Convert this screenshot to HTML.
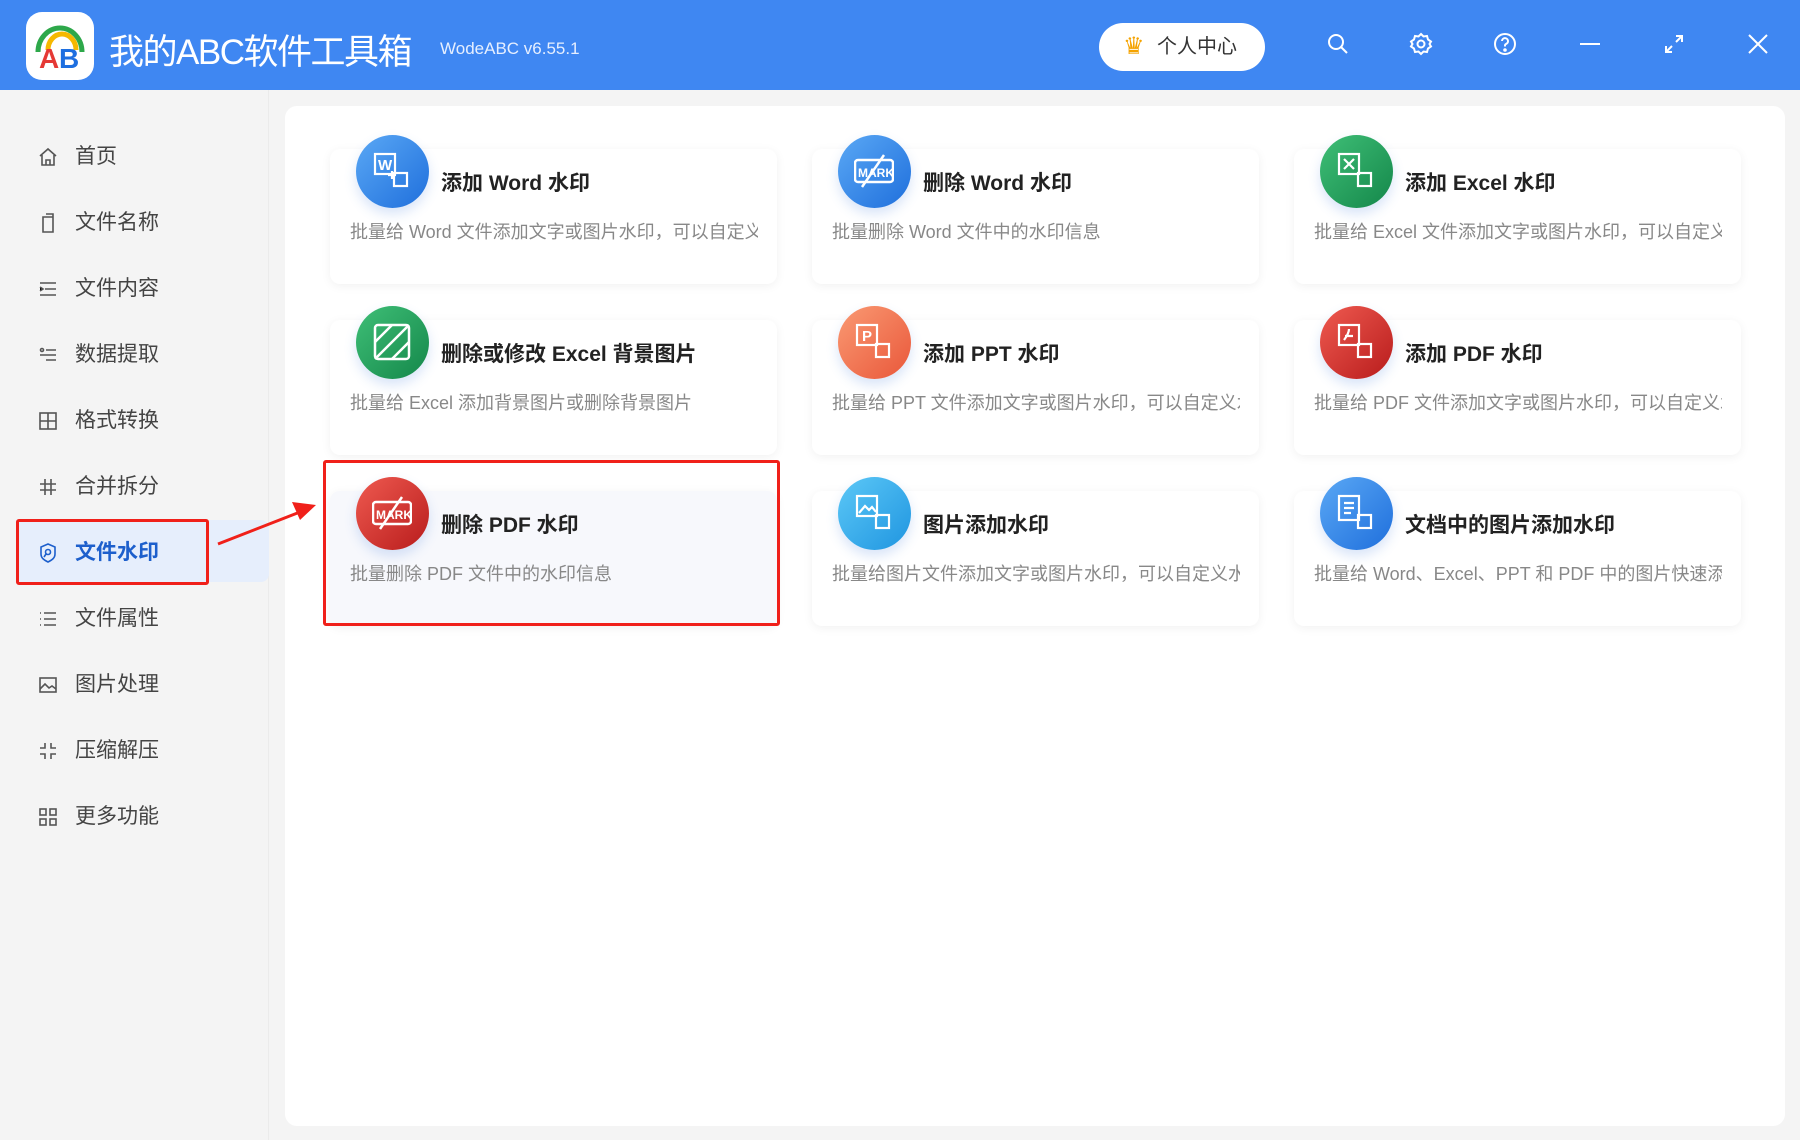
<!DOCTYPE html>
<html><head><meta charset="utf-8"><style>
*{margin:0;padding:0;box-sizing:border-box}
body{width:1800px;height:1140px;background:#f4f4f4;font-family:"Liberation Sans","Noto Sans CJK SC",sans-serif;position:relative;overflow:hidden}
.hdr{position:absolute;left:0;top:0;width:1800px;height:90px;background:#3f87f2}
.logo{position:absolute;left:26px;top:12px;width:68px;height:68px;background:#fff;border-radius:16px}
.title{position:absolute;left:109px;top:24px;color:#fff;font-size:35px;letter-spacing:-1.5px}
.ver{position:absolute;left:440px;top:39px;color:#e6efff;font-size:17px}
.btn{position:absolute;left:1099px;top:23px;width:166px;height:48px;background:#fff;border-radius:24px;font-size:20px;color:#333;line-height:48px;padding-left:58px}
.hi{position:absolute;top:32px}
.side{position:absolute;left:0;top:90px;width:269px;height:1050px;border-right:1px solid #ebebeb}
.it{position:absolute;left:0;width:269px;height:40px;font-size:21px;color:#444;line-height:40px;padding-left:75px}
.it svg{position:absolute;left:38px;top:10px}
.act{position:absolute;left:16px;top:520px;width:253px;height:62px;background:#e6eefc;border-radius:0 8px 8px 0}
.redsb{position:absolute;left:16px;top:519px;width:193px;height:66px;border:3px solid #f0201a;border-radius:3px}
.main{position:absolute;left:285px;top:106px;width:1500px;height:1020px;background:#fff;border-radius:12px}
.card{position:absolute;width:447px;height:135px;background:#fff;border-radius:10px;box-shadow:0 2px 10px rgba(0,0,0,0.06)}
.card .ic{position:absolute;left:26px;top:-14px;width:73px;height:73px;border-radius:50%;box-shadow:0 6px 12px rgba(60,120,220,0.2)}
.card .t{position:absolute;left:111px;top:18px;font-size:21px;font-weight:bold;color:#222}
.card .d{position:absolute;left:20px;top:69px;width:408px;white-space:nowrap;overflow:hidden;font-size:18px;color:#888}
.ic svg{position:absolute;left:16px;top:16px}
</style></head><body>
<div class="hdr">
 <div class="logo"><svg width="68" height="68" viewBox="0 0 68 68"><path d="M12 40 A22 24 0 0 1 56 40" fill="none" stroke="#2da84a" stroke-width="5"/><path d="M22 38 A14 16 0 0 1 50 38" fill="none" stroke="#f6b800" stroke-width="5"/><text x="13" y="56" font-size="28" font-weight="bold" fill="#e53935" font-family="Liberation Sans">A</text><text x="33" y="56" font-size="28" font-weight="bold" fill="#1e6fe0" font-family="Liberation Sans">B</text></svg></div>
 <div class="title">我的ABC软件工具箱</div>
 <div class="ver">WodeABC v6.55.1</div>
 <div class="btn"><span style="position:absolute;left:24px;top:0;color:#f5a300;font-size:24px">♛</span>个人中心</div>
 <svg class="hi" style="left:1326px" width="24" height="24" viewBox="0 0 24 24" fill="none" stroke="#fff" stroke-width="2"><circle cx="10" cy="10" r="7"/><path d="M15 15l6 6"/></svg>
 <svg class="hi" style="left:1409px" width="24" height="24" viewBox="0 0 24 24" fill="none" stroke="#fff" stroke-width="2"><circle cx="12" cy="12" r="3.5"/><path d="M12 2l2.5 2.5 3.5-.5 1 3.5 3 2-1.5 2.5 1.5 2.5-3 2-1 3.5-3.5-.5L12 22l-2.5-2.5-3.5.5-1-3.5-3-2L3.5 12 2 9.5l3-2 1-3.5 3.5.5z"/></svg>
 <svg class="hi" style="left:1493px" width="24" height="24" viewBox="0 0 24 24" fill="none" stroke="#fff" stroke-width="2"><circle cx="12" cy="12" r="10"/><path d="M9 9a3 3 0 1 1 4 3c-1 .5-1 1-1 2.5"/><circle cx="12" cy="18" r=".8" fill="#fff"/></svg>
 <svg class="hi" style="left:1578px" width="24" height="24" viewBox="0 0 24 24" stroke="#fff" stroke-width="2"><path d="M2 12h20"/></svg>
 <svg class="hi" style="left:1662px" width="24" height="24" viewBox="0 0 24 24" fill="none" stroke="#fff" stroke-width="2"><path d="M4 20l6-6M20 4l-6 6M14 4h6v6M4 14v6h6"/></svg>
 <svg class="hi" style="left:1746px" width="24" height="24" viewBox="0 0 24 24" stroke="#fff" stroke-width="2"><path d="M3 3l18 18M21 3L3 21"/></svg>
</div>
<div class="side"></div>
<div class="act"></div>
<div class="it" style="top:137px"><svg width="20" height="20" viewBox="0 0 20 20" fill="none" stroke="#555" stroke-width="1.6"><path d="M2 9l8-7 8 7M4 8v10h12V8M8 18v-5h4v5"/></svg>首页</div>
<div class="it" style="top:203px"><svg width="20" height="20" viewBox="0 0 20 20" fill="none" stroke="#555" stroke-width="1.6"><path d="M5 4h10v15H5zM8 1h7v3"/></svg>文件名称</div>
<div class="it" style="top:269px"><svg width="20" height="20" viewBox="0 0 20 20" stroke="#555" stroke-width="1.6"><path d="M2 4h16M7 10h11M2 16h16M2 8l3 2-3 2"/></svg>文件内容</div>
<div class="it" style="top:335px"><svg width="20" height="20" viewBox="0 0 20 20" fill="none" stroke="#555" stroke-width="1.6"><path d="M8 5h10M2 10h16M8 15h10"/><circle cx="4" cy="5" r="1.5"/></svg>数据提取</div>
<div class="it" style="top:401px"><svg width="20" height="20" viewBox="0 0 20 20" fill="none" stroke="#555" stroke-width="1.6"><rect x="2" y="2" width="16" height="16"/><path d="M10 2v16M2 10h16"/></svg>格式转换</div>
<div class="it" style="top:467px"><svg width="20" height="20" viewBox="0 0 20 20" stroke="#555" stroke-width="1.6"><path d="M7 2v16M13 2v16M2 7h16M2 13h16"/></svg>合并拆分</div>
<div class="it" style="top:533px;color:#1d5fcc;font-weight:bold"><svg width="20" height="20" viewBox="0 0 20 20" fill="none" stroke="#1d5fcc" stroke-width="1.6"><path d="M10 1l7 3v7c0 4-3 6-7 8-4-2-7-4-7-8V4z"/><circle cx="10" cy="9" r="2.5"/><path d="M8 11l-2 3"/></svg>文件水印</div>
<div class="redsb"></div>
<div class="it" style="top:599px"><svg width="20" height="20" viewBox="0 0 20 20" stroke="#555" stroke-width="1.6"><path d="M6 4h12M6 10h12M6 16h12M2 4h1M2 10h1M2 16h1"/></svg>文件属性</div>
<div class="it" style="top:665px"><svg width="20" height="20" viewBox="0 0 20 20" fill="none" stroke="#555" stroke-width="1.6"><rect x="2" y="3" width="16" height="14"/><path d="M2 14l5-5 4 4 3-2 4 3"/></svg>图片处理</div>
<div class="it" style="top:731px"><svg width="20" height="20" viewBox="0 0 20 20" fill="none" stroke="#555" stroke-width="1.6"><path d="M7 2v5H2M13 2v5h5M7 18v-5H2M13 18v-5h5"/></svg>压缩解压</div>
<div class="it" style="top:797px"><svg width="20" height="20" viewBox="0 0 20 20" fill="none" stroke="#555" stroke-width="1.6"><rect x="2" y="2" width="6" height="6"/><rect x="12" y="2" width="6" height="6"/><rect x="2" y="12" width="6" height="6"/><rect x="12" y="12" width="6" height="6"/></svg>更多功能</div>

<div class="main"></div>

<div class="card" style="left:330px;top:149px"><div class="ic" style="background:linear-gradient(135deg,#5aa8f5,#1f6fdc)"><svg width="40" height="40" viewBox="0 0 40 40" fill="none" stroke="#fff" stroke-width="2.2"><rect x="3" y="3" width="20" height="20"/><text x="6" y="19" font-size="15" font-weight="bold" fill="#fff" stroke="none" font-family="Liberation Sans">W</text><rect x="22" y="22" width="13" height="13"/><path d="M20 20v8M16 24h8"/></svg></div><div class="t">添加 Word 水印</div><div class="d">批量给 Word 文件添加文字或图片水印，可以自定义</div></div>
<div class="card" style="left:812px;top:149px"><div class="ic" style="background:linear-gradient(135deg,#5aa8f5,#1f6fdc)"><svg width="40" height="40" viewBox="0 0 40 40" fill="none" stroke="#fff" stroke-width="2.5"><rect x="1" y="9" width="38" height="22" rx="3"/><text x="4" y="26" font-size="12" font-weight="bold" fill="#fff" stroke="none" font-family="Liberation Sans">MARK</text><path d="M30 4L8 36"/></svg></div><div class="t">删除 Word 水印</div><div class="d">批量删除 Word 文件中的水印信息</div></div>
<div class="card" style="left:1294px;top:149px"><div class="ic" style="background:linear-gradient(135deg,#3fbf77,#14874a)"><svg width="40" height="40" viewBox="0 0 40 40" fill="none" stroke="#fff" stroke-width="2.2"><rect x="3" y="3" width="20" height="20"/><path d="M8 8l10 10M18 8L8 18"/><rect x="22" y="22" width="13" height="13"/></svg></div><div class="t">添加 Excel 水印</div><div class="d">批量给 Excel 文件添加文字或图片水印，可以自定义</div></div>

<div class="card" style="left:330px;top:320px"><div class="ic" style="background:linear-gradient(135deg,#3fbf77,#14874a)"><svg width="40" height="40" viewBox="0 0 40 40" fill="none" stroke="#fff" stroke-width="2.5"><rect x="3" y="3" width="34" height="34" rx="3"/><path d="M3 20L20 3M3 37L37 3M20 37L37 20"/></svg></div><div class="t">删除或修改 Excel 背景图片</div><div class="d">批量给 Excel 添加背景图片或删除背景图片</div></div>
<div class="card" style="left:812px;top:320px"><div class="ic" style="background:linear-gradient(135deg,#fa9a73,#e9573a)"><svg width="40" height="40" viewBox="0 0 40 40" fill="none" stroke="#fff" stroke-width="2.2"><rect x="3" y="3" width="20" height="20"/><text x="8" y="19" font-size="15" font-weight="bold" fill="#fff" stroke="none" font-family="Liberation Sans">P</text><rect x="22" y="22" width="13" height="13"/></svg></div><div class="t">添加 PPT 水印</div><div class="d">批量给 PPT 文件添加文字或图片水印，可以自定义水</div></div>
<div class="card" style="left:1294px;top:320px"><div class="ic" style="background:linear-gradient(135deg,#ef5a50,#b81c1c)"><svg width="40" height="40" viewBox="0 0 40 40" fill="none" stroke="#fff" stroke-width="2.2"><rect x="3" y="3" width="20" height="20"/><path d="M8 18c3-4 5-8 5-11M9 14h8"/><rect x="22" y="22" width="13" height="13"/></svg></div><div class="t">添加 PDF 水印</div><div class="d">批量给 PDF 文件添加文字或图片水印，可以自定义水</div></div>

<div class="card" style="left:330px;top:491px;background:#f7f8fc"><div class="ic" style="background:linear-gradient(135deg,#ef5a50,#b81c1c)"><svg width="40" height="40" viewBox="0 0 40 40" fill="none" stroke="#fff" stroke-width="2.5"><rect x="1" y="9" width="38" height="22" rx="3"/><text x="4" y="26" font-size="12" font-weight="bold" fill="#fff" stroke="none" font-family="Liberation Sans">MARK</text><path d="M30 4L8 36"/></svg></div><div class="t">删除 PDF 水印</div><div class="d">批量删除 PDF 文件中的水印信息</div></div>
<div class="card" style="left:812px;top:491px"><div class="ic" style="background:linear-gradient(135deg,#5cc8f7,#1f95e0)"><svg width="40" height="40" viewBox="0 0 40 40" fill="none" stroke="#fff" stroke-width="2.2"><rect x="3" y="3" width="20" height="20"/><path d="M5 20l6-7 4 4 3-3 4 5"/><rect x="22" y="22" width="13" height="13"/></svg></div><div class="t">图片添加水印</div><div class="d">批量给图片文件添加文字或图片水印，可以自定义水</div></div>
<div class="card" style="left:1294px;top:491px"><div class="ic" style="background:linear-gradient(135deg,#5aa8f5,#1f6fdc)"><svg width="40" height="40" viewBox="0 0 40 40" fill="none" stroke="#fff" stroke-width="2.2"><rect x="3" y="3" width="20" height="24"/><path d="M8 10h10M8 15h10M8 20h7"/><rect x="22" y="22" width="13" height="13"/></svg></div><div class="t">文档中的图片添加水印</div><div class="d">批量给 Word、Excel、PPT 和 PDF 中的图片快速添加</div></div>

<div style="position:absolute;left:323px;top:460px;width:457px;height:166px;border:3px solid #f0201a;border-radius:3px"></div>
<svg style="position:absolute;left:0;top:0" width="400" height="700"><path d="M218 544L300 512" stroke="#f0201a" stroke-width="3"/><path d="M316 505L292 502 300 520z" fill="#f0201a"/></svg>
</body></html>
